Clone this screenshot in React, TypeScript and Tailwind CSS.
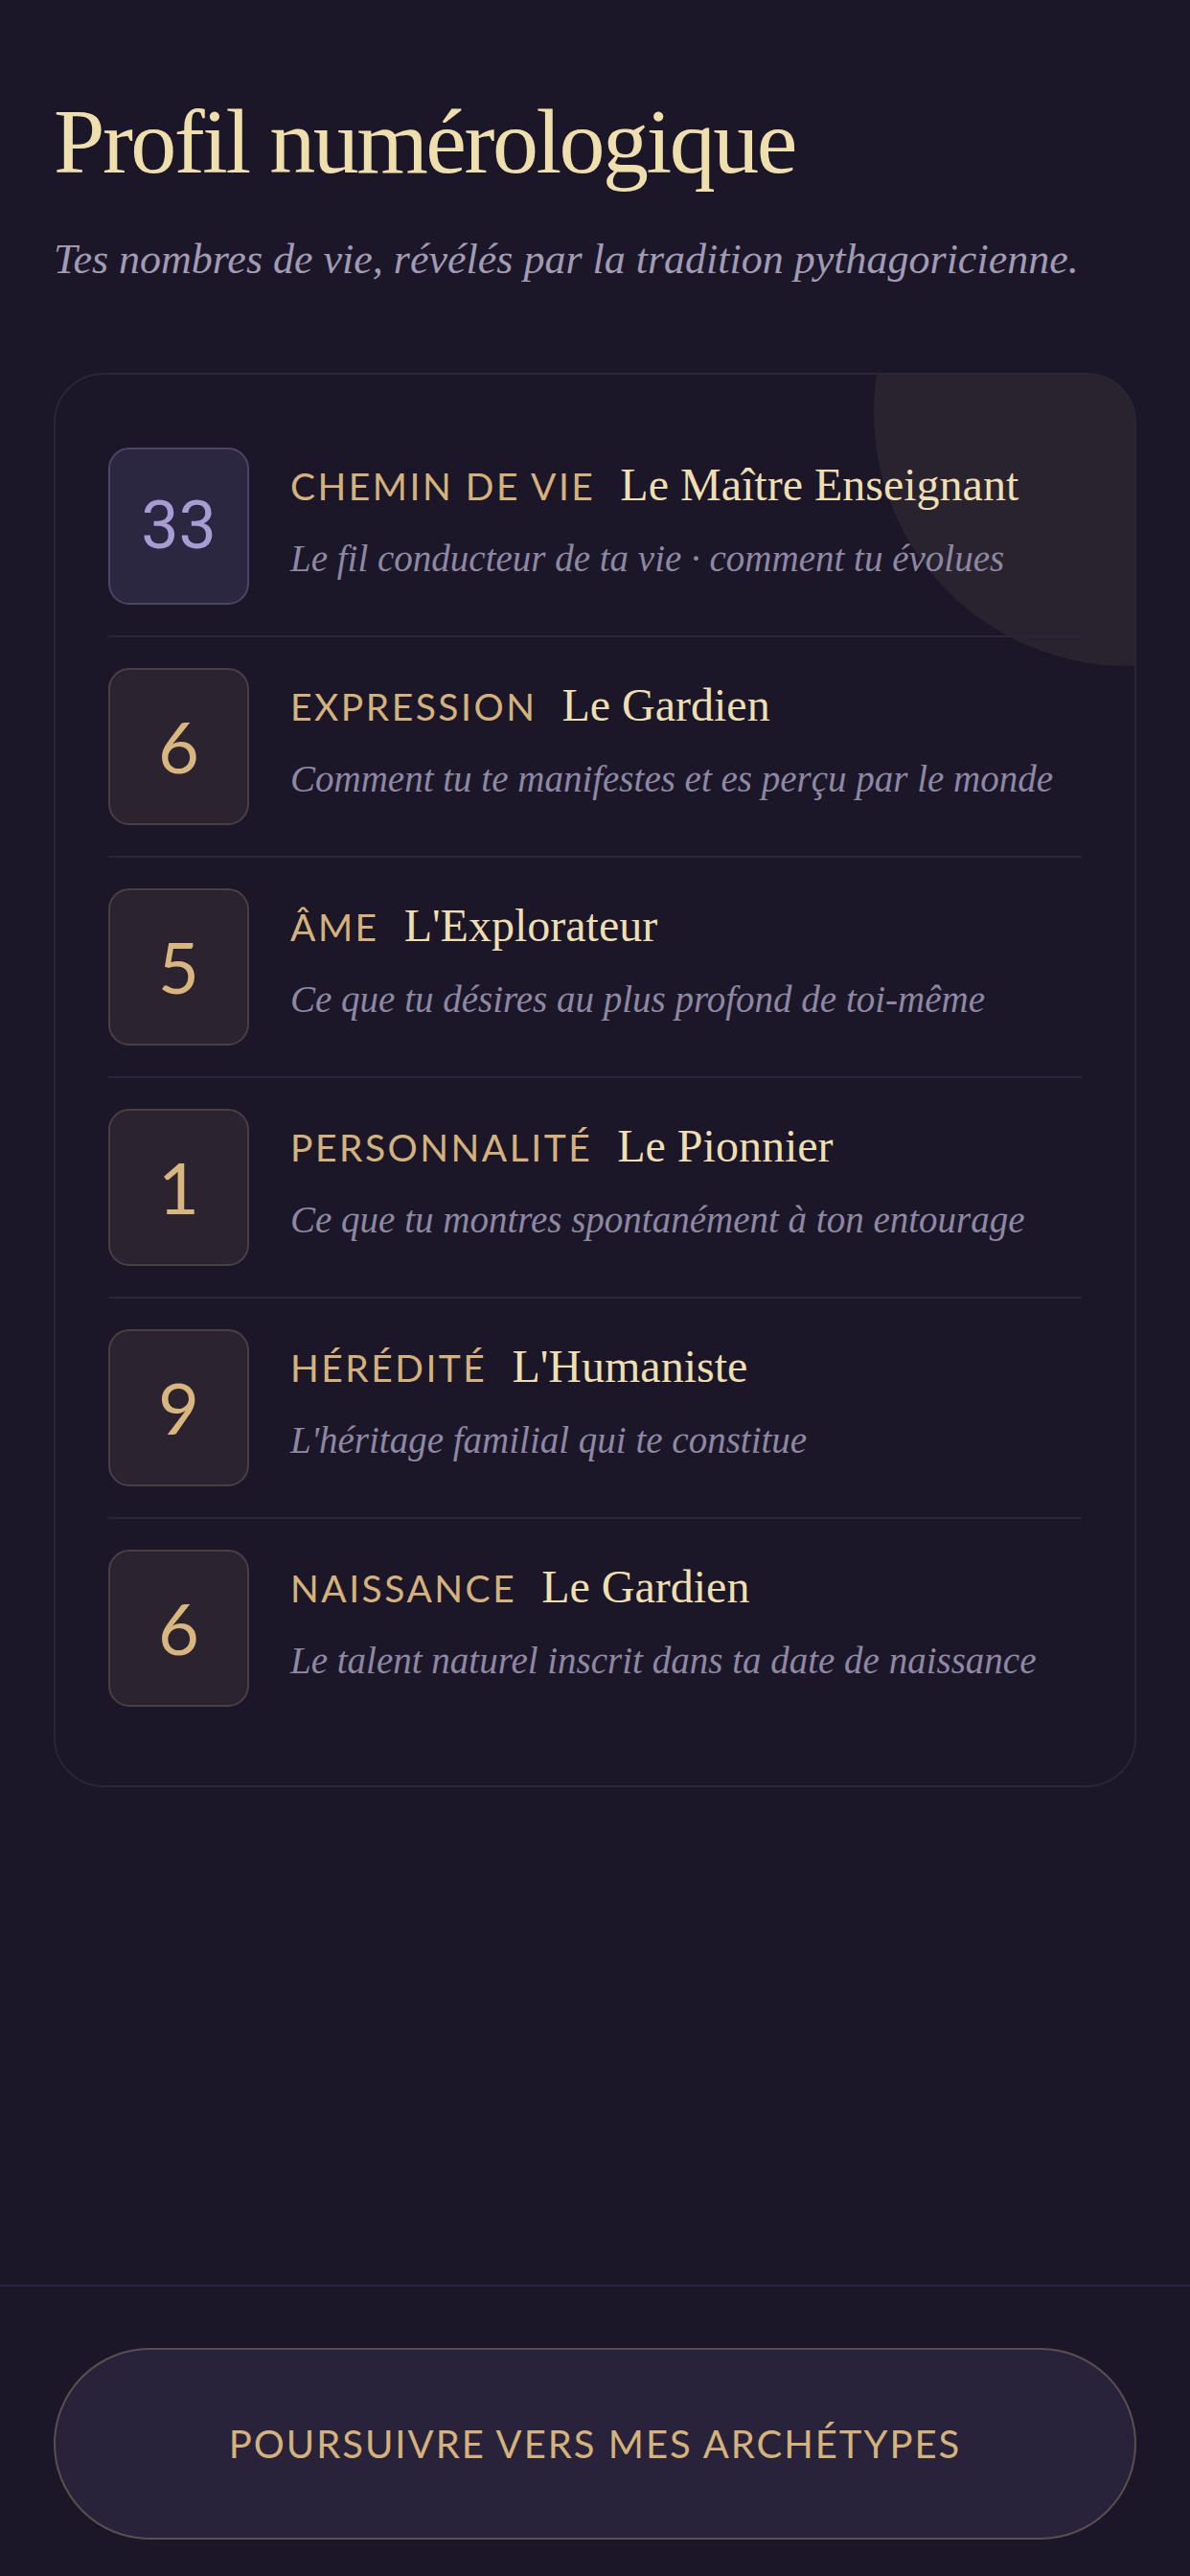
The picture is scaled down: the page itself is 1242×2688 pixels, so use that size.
const serif = { fontFamily: '"Liberation Serif", "DejaVu Serif", serif' };
const sans = { fontFamily: 'Lato, "Noto Sans", sans-serif' };

type Row = { n: string; label: string; title: string; desc: string; master?: boolean };

const rows: Row[] = [
  { n: "33", label: "CHEMIN DE VIE", title: "Le Maître Enseignant", desc: "Le fil conducteur de ta vie · comment tu évolues", master: true },
  { n: "6", label: "EXPRESSION", title: "Le Gardien", desc: "Comment tu te manifestes et es perçu par le monde" },
  { n: "5", label: "ÂME", title: "L'Explorateur", desc: "Ce que tu désires au plus profond de toi-même" },
  { n: "1", label: "PERSONNALITÉ", title: "Le Pionnier", desc: "Ce que tu montres spontanément à ton entourage" },
  { n: "9", label: "HÉRÉDITÉ", title: "L'Humaniste", desc: "L'héritage familial qui te constitue" },
  { n: "6", label: "NAISSANCE", title: "Le Gardien", desc: "Le talent naturel inscrit dans ta date de naissance" },
];

function NumberRow(props: { row: Row; last: boolean }) {
  const { row } = props;
  return (
    <div className={["flex items-start py-[32px]", props.last ? "" : "border-b-2 border-[#29253a]"].join(" ")}>
      <div
        className={[
          "w-[147px] h-[164px] shrink-0 rounded-[22px] border-2 flex items-center justify-center",
          row.master ? "bg-[#2c2740] border-[#4c4566]" : "bg-[#2b2430] border-[#4a3f42]",
        ].join(" ")}
      >
        <span
          className={row.master ? "text-[70px] text-[#a79dd4] font-normal" : "text-[74px] text-[#d8b67e] font-normal"}
          style={row.master ? { fontFamily: 'Roboto, "Noto Sans", sans-serif' } : sans}
        >
          {row.n}
        </span>
      </div>
      <div className="ml-[43px] pt-[11px] min-w-0">
        <div className="flex items-baseline h-[56px] leading-[56px] whitespace-nowrap">
          <span className="text-[39px] tracking-[2.5px] text-[#d5b27c]" style={sans}>
            {row.label}
          </span>
          <span className="ml-[26px] text-[48px] text-[#efdfb0]" style={serif}>
            {row.title}
          </span>
        </div>
        <div className="mt-[25px] text-[39px] leading-[48px] italic text-[#8e88a3] whitespace-nowrap" style={serif}>
          {row.desc}
        </div>
      </div>
    </div>
  );
}

export default function App() {
  return (
    <div className="min-h-[2688px] w-full bg-[#1b1729] flex flex-col">
      <div className="px-[56px]">
        <h1 className="mt-[95px] text-[96px] leading-[1.1] tracking-[-2.5px] text-[#efdfad]" style={serif}>
          Profil numérologique
        </h1>
        <p className="mt-[41px] text-[44px] leading-[1.3] italic text-[#a19bb4] whitespace-nowrap" style={serif}>
          Tes nombres de vie, révélés par la tradition pythagoricienne.
        </p>

        <section className="relative mt-[90px] overflow-hidden rounded-[52px] border-2 border-[#2a2639] bg-[#1b1729] px-[55px] pt-[44px] pb-[50px]">
          <div className="absolute right-[-258px] top-[-226px] w-[530px] h-[530px] rounded-full bg-[#d4b27a]/[0.08]" />
          <div className="relative">
            {rows.map((r, i) => (
              <NumberRow key={r.label} row={r} last={i === rows.length - 1} />
            ))}
          </div>
        </section>
      </div>

      <div className="flex-1" />

      <footer className="border-t-2 border-[#29253a] px-[56px] pt-[64px] pb-[38px]">
        <button className="w-full h-[200px] rounded-full border-2 border-[#5a4f4e] bg-[#28233a] flex items-center justify-center">
          <span className="text-[40px] tracking-[2px] text-[#d5b27c]" style={sans}>
            POURSUIVRE VERS MES ARCHÉTYPES
          </span>
        </button>
      </footer>
    </div>
  );
}
